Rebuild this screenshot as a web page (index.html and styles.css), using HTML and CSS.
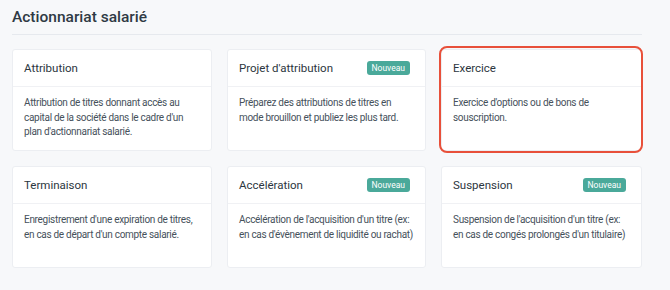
FILE: index.html
```html
<!DOCTYPE html>
<html lang="fr">
<head>
  <meta charset="UTF-8" />
  <title>Actionnariat salarié</title>
  <link rel="stylesheet" href="styles.css">
</head>
<body>
  <div class="wrapper">
    <h1>Actionnariat salarié</h1>

    <div class="grid">
      <div class="card">
        <div class="card-head"><span>Attribution</span></div>
        <div class="card-body">Attribution de titres donnant accès au capital de la société dans le cadre d'un plan d'actionnariat salarié.</div>
      </div>
      <div class="card">
        <div class="card-head"><span>Projet d'attribution</span><span class="badge">Nouveau</span></div>
        <div class="card-body">Préparez des attributions de titres en mode brouillon et publiez les plus tard.</div>
      </div>
      <div class="card selected">
        <div class="card-head"><span>Exercice</span></div>
        <div class="card-body">Exercice d'options ou de bons de souscription.</div>
      </div>
      <div class="card">
        <div class="card-head"><span>Terminaison</span></div>
        <div class="card-body">Enregistrement d'une expiration de titres, en cas de départ d'un compte salarié.</div>
      </div>
      <div class="card">
        <div class="card-head"><span>Accélération</span><span class="badge">Nouveau</span></div>
        <div class="card-body">Accélération de l'acquisition d'un titre (ex: en cas d'évènement de liquidité ou rachat)</div>
      </div>
      <div class="card">
        <div class="card-head"><span>Suspension</span><span class="badge">Nouveau</span></div>
        <div class="card-body">Suspension de l'acquisition d'un titre (ex: en cas de congés prolongés d'un titulaire)</div>
      </div>
    </div>
  </div>
</body>
</html>
```

FILE: styles.css
```css
body {
  margin: 0;
  font-family: Roboto, "Noto Sans", sans-serif;
  background: #f7f8fa;
  color: #2f3a44;
}
.wrapper {
  width: 630px;
  padding: 6px 12px 0;
}
h1 {
  margin: 0;
  font-size: 15.5px;
  font-weight: 500;
  line-height: 22px;
  padding-bottom: 6px;
  border-bottom: 1px solid #e6e9ee;
}
.grid {
  display: grid;
  grid-template-columns: 200px 199px 201px;
  column-gap: 15px;
  row-gap: 15px;
  margin-top: 14px;
}
.card {
  position: relative;
  background: #fff;
  border: 1px solid #eceef2;
  border-radius: 3px;
  height: 100px;
}
.card.selected::after {
  content: "";
  position: absolute;
  top: -4px;
  left: -3px;
  right: -2px;
  bottom: -3px;
  border: 2px solid #e8503a;
  border-radius: 8px;
}
.card-head {
  display: flex;
  justify-content: space-between;
  align-items: center;
  height: 36px;
  padding: 0 15px 0 11px;
  border-bottom: 1px solid #f0f1f4;
  font-size: 11.5px;
  font-weight: 400;
  color: #2c3640;
}
.badge {
  background: #4aa99a;
  color: #fff;
  font-size: 8.5px;
  line-height: 10px;
  padding: 2px 5px;
  border-radius: 3px;
}
.card-body {
  padding: 9px 11px;
  font-size: 10px;
  line-height: 14.5px;
  letter-spacing: -0.3px;
  color: #46515b;
}
```
